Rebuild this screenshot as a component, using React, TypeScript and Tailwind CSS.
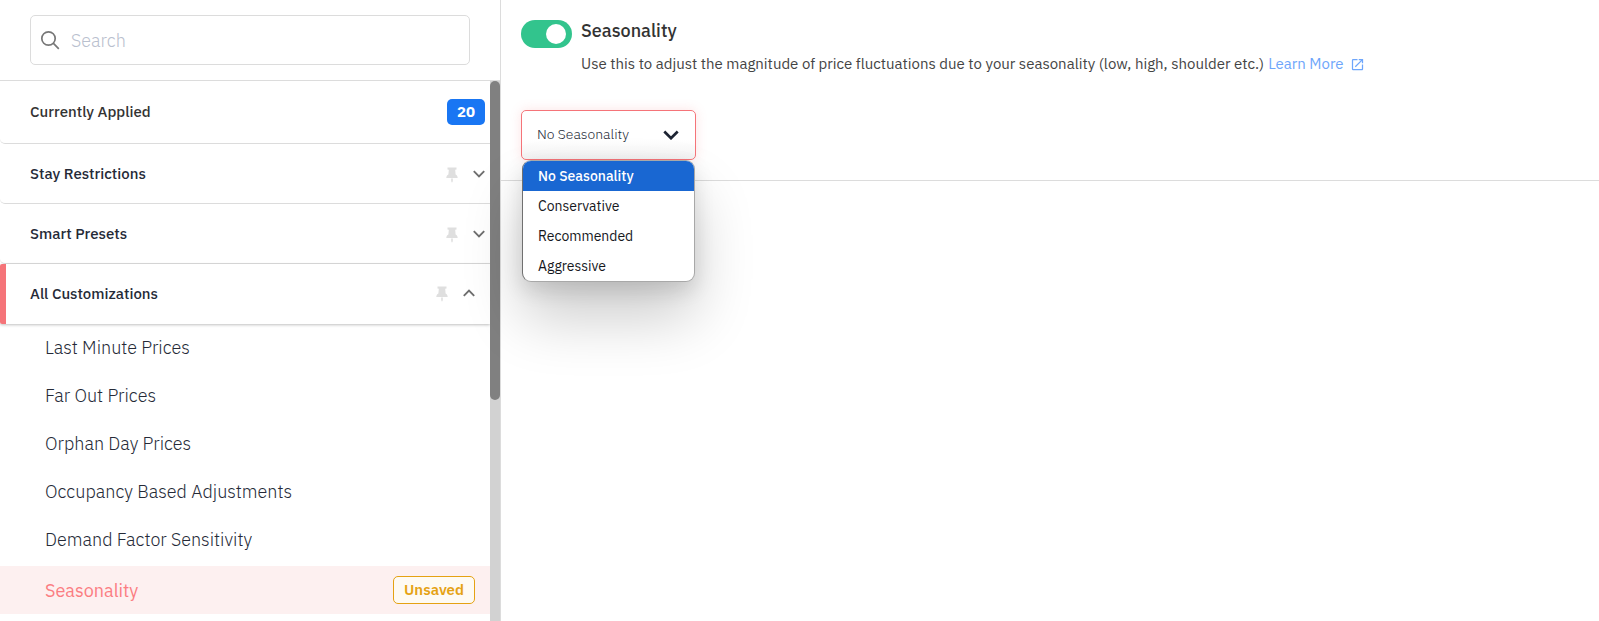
import { useState } from "react";
import { MdOpenInNew } from "react-icons/md";

const customizations = [
  "Last Minute Prices",
  "Far Out Prices",
  "Orphan Day Prices",
  "Occupancy Based Adjustments",
  "Demand Factor Sensitivity",
  "Seasonality",
];

const levels = ["No Seasonality", "Conservative", "Recommended", "Aggressive"];

function SearchIcon() {
  return (
    <svg viewBox="0 0 20 20" className="size-5 shrink-0" fill="none" stroke="#777" strokeWidth="1.7" aria-hidden="true">
      <circle cx="8.500" cy="8.500" r="6.700" />
      <path d="M13.200 13.200 18.800 18.800" />
    </svg>
  );
}

function PinIcon() {
  return (
    <svg viewBox="0 0 12 16" className="h-4 w-3" fill="#dfdfdf" aria-hidden="true">
      <path d="M1.500 0.500h9v1.900L9.200 2.800l.4 4.600c1.200.6 2 1.600 2.100 3.600H.3c.1-2 .9-3 2.100-3.600l.4-4.600L1.500 2.400zM5.200 11.500h1.600v2.800L6 15.800l-.8-1.500z" />
    </svg>
  );
}

function Chevron({ up = false }: { up?: boolean }) {
  return (
    <svg viewBox="0 0 12 8" className="mb-0.5 h-2 w-3" fill="none" stroke="#6e6e6e" strokeWidth="1.9" aria-hidden="true">
      <path d={up ? "M.8 6.800 6 1.600l5.200 5.200" : "M.8 1.200 6 6.400l5.200-5.200"} />
    </svg>
  );
}

function Section({ label, open = false }: { label: string; open?: boolean }) {
  return (
    <div
      className={
        open
          ? "flex h-15 items-center rounded-l-[2px] border-l-6 border-[#f57479] pr-[15px] pl-6 shadow-[0_1px_3px_rgba(0,0,0,0.25)]"
          : "flex h-15 items-center rounded-bl-[5px] border-b border-[#dcdcdc] pt-0.5 pr-[5px] pl-[30px]"
      }
    >
      <button type="button" aria-expanded={open} className="flex-1 text-left text-[15px] font-medium text-[#252a37]">
        {label}
      </button>
      <button type="button" aria-label={"Pin " + label} className="mr-[15px]">
        <PinIcon />
      </button>
      <Chevron up={open} />
    </div>
  );
}

function Sidebar() {
  return (
    <aside className="flex w-[501px] shrink-0 flex-col border-r border-[#dcdcdc]">
      <div className="border-b border-[#dcdcdc] px-[30px] py-[15px]">
        <label className="flex h-[50px] items-center gap-[11px] rounded-[5px] border border-[#dcdcdc] px-[9px]">
          <SearchIcon />
          <input
            type="search"
            aria-label="Search"
            placeholder="Search"
            className="min-w-0 flex-1 text-[18px] font-light outline-none placeholder:text-[#b9c0ce]"
          />
        </label>
      </div>
      <div className="flex min-h-0 flex-1">
        <nav className="min-w-0 flex-1 overflow-hidden">
          <div className="flex h-[63px] items-center justify-between rounded-bl-[5px] border-b border-[#dcdcdc] pr-[5px] pl-[30px]">
            <span className="text-[15px] font-medium text-[#333]">Currently Applied</span>
            <span className="flex h-[26px] items-center rounded-[5px] bg-[#1976f3] px-[10px] text-[15px] font-bold text-white">
              20
            </span>
          </div>
          <Section label="Stay Restrictions" />
          <Section label="Smart Presets" />
          <Section label="All Customizations" open />
          <ul className="text-[18px] font-light text-[#252a37]">
            {customizations.map((name) => {
              const active = name === "Seasonality";
              return (
                <li
                  key={name}
                  className={
                    active
                      ? "mt-0.5 flex h-12 items-center justify-between bg-[#fdf0f0] pr-[15px] pl-[45px] text-[#fb7d82]"
                      : "flex h-12 items-center pr-[15px] pb-0.5 pl-[45px]"
                  }
                >
                  <a href="#" className={active ? "font-normal" : ""}>
                    {name}
                  </a>
                  {active && (
                    <span className="flex h-7 items-center rounded-[5px] border border-[#e5a213] bg-[#fefaf3] px-[10px] text-[15px] font-semibold text-[#e5a213]">
                      Unsaved
                    </span>
                  )}
                </li>
              );
            })}
          </ul>
        </nav>
        <div className="w-[10px] shrink-0 bg-[#d2d2d2]" aria-hidden="true">
          <div className="h-[59%] rounded-[5px] bg-[#808080]" />
        </div>
      </div>
    </aside>
  );
}

export default function App() {
  const [enabled, setEnabled] = useState(true);
  const [level, setLevel] = useState(levels[0]);

  return (
    <div className="flex h-screen overflow-hidden bg-white font-['IBM_Plex_Sans',Roboto,sans-serif]">
      <Sidebar />
      <main className="min-w-0 flex-1">
        <section className="border-b border-[#dcdcdc] p-5">
          <div className="flex gap-[9px]">
            <label className="flex h-7 w-[51px] shrink-0 cursor-pointer items-center justify-end rounded-full bg-[#32c48d] pr-[6px]">
              <input
                type="checkbox"
                role="switch"
                aria-label="Seasonality"
                checked={enabled}
                onChange={(e) => setEnabled(e.target.checked)}
                className="size-5 appearance-none rounded-full bg-white"
              />
            </label>
            <div>
              <h1 className="text-[18px] leading-[22px] font-medium text-[#333]">Seasonality</h1>
              <p className="mt-[10px] flex flex-wrap items-center gap-1 text-[15px] leading-6 text-[#444]">
                Use this to adjust the magnitude of price fluctuations due to your seasonality (low, high, shoulder etc.)
                <a href="#" className="flex items-center gap-[6px] text-[#6ea6fb]">
                  Learn More
                  <MdOpenInNew className="size-[15px]" />
                </a>
              </p>
            </div>
          </div>
          <div className="relative mt-[34px] w-[175px]">
            <select
              aria-label="Seasonality level"
              value={level}
              onChange={(e) => setLevel(e.target.value)}
              className="h-[50px] w-full appearance-none rounded-[5px] border border-[#f57479] bg-linear-to-b from-white from-60% to-[#f3f3f3] pb-0.5 pl-[15px] text-[14px] font-light text-[#252a37] shadow-[0_0_12px_rgba(245,116,121,0.2)] outline-none"
            >
              {levels.map((name) => (
                <option key={name}>{name}</option>
              ))}
            </select>
            <svg
              viewBox="0 0 16 10"
              className="pointer-events-none absolute top-5 right-[17px] h-[10px] w-4"
              fill="none"
              stroke="#1d2433"
              strokeWidth="2.7"
              aria-hidden="true"
            >
              <path d="M1.300 1.500 8 8.200l6.700-6.700" />
            </svg>
            <ul
              role="listbox"
              aria-label="Seasonality levels"
              className="absolute top-[50px] left-px z-10 w-[173px] overflow-hidden rounded-[9px] border border-[#a8a8a8] border-l-[#707070] bg-white text-[14px] text-[#16181d] shadow-[0_36px_60px_rgba(0,0,0,0.2),0_8px_20px_rgba(0,0,0,0.12)]"
            >
              {levels.map((name) => (
                <li
                  key={name}
                  role="option"
                  aria-selected={name === level}
                  onClick={() => setLevel(name)}
                  className={
                    name === level
                      ? "flex h-[30px] items-center bg-[#1967d2] pt-px pl-[15px] font-medium text-white"
                      : "flex h-[30px] items-center pt-px pl-[15px]"
                  }
                >
                  {name}
                </li>
              ))}
            </ul>
          </div>
        </section>
      </main>
    </div>
  );
}
